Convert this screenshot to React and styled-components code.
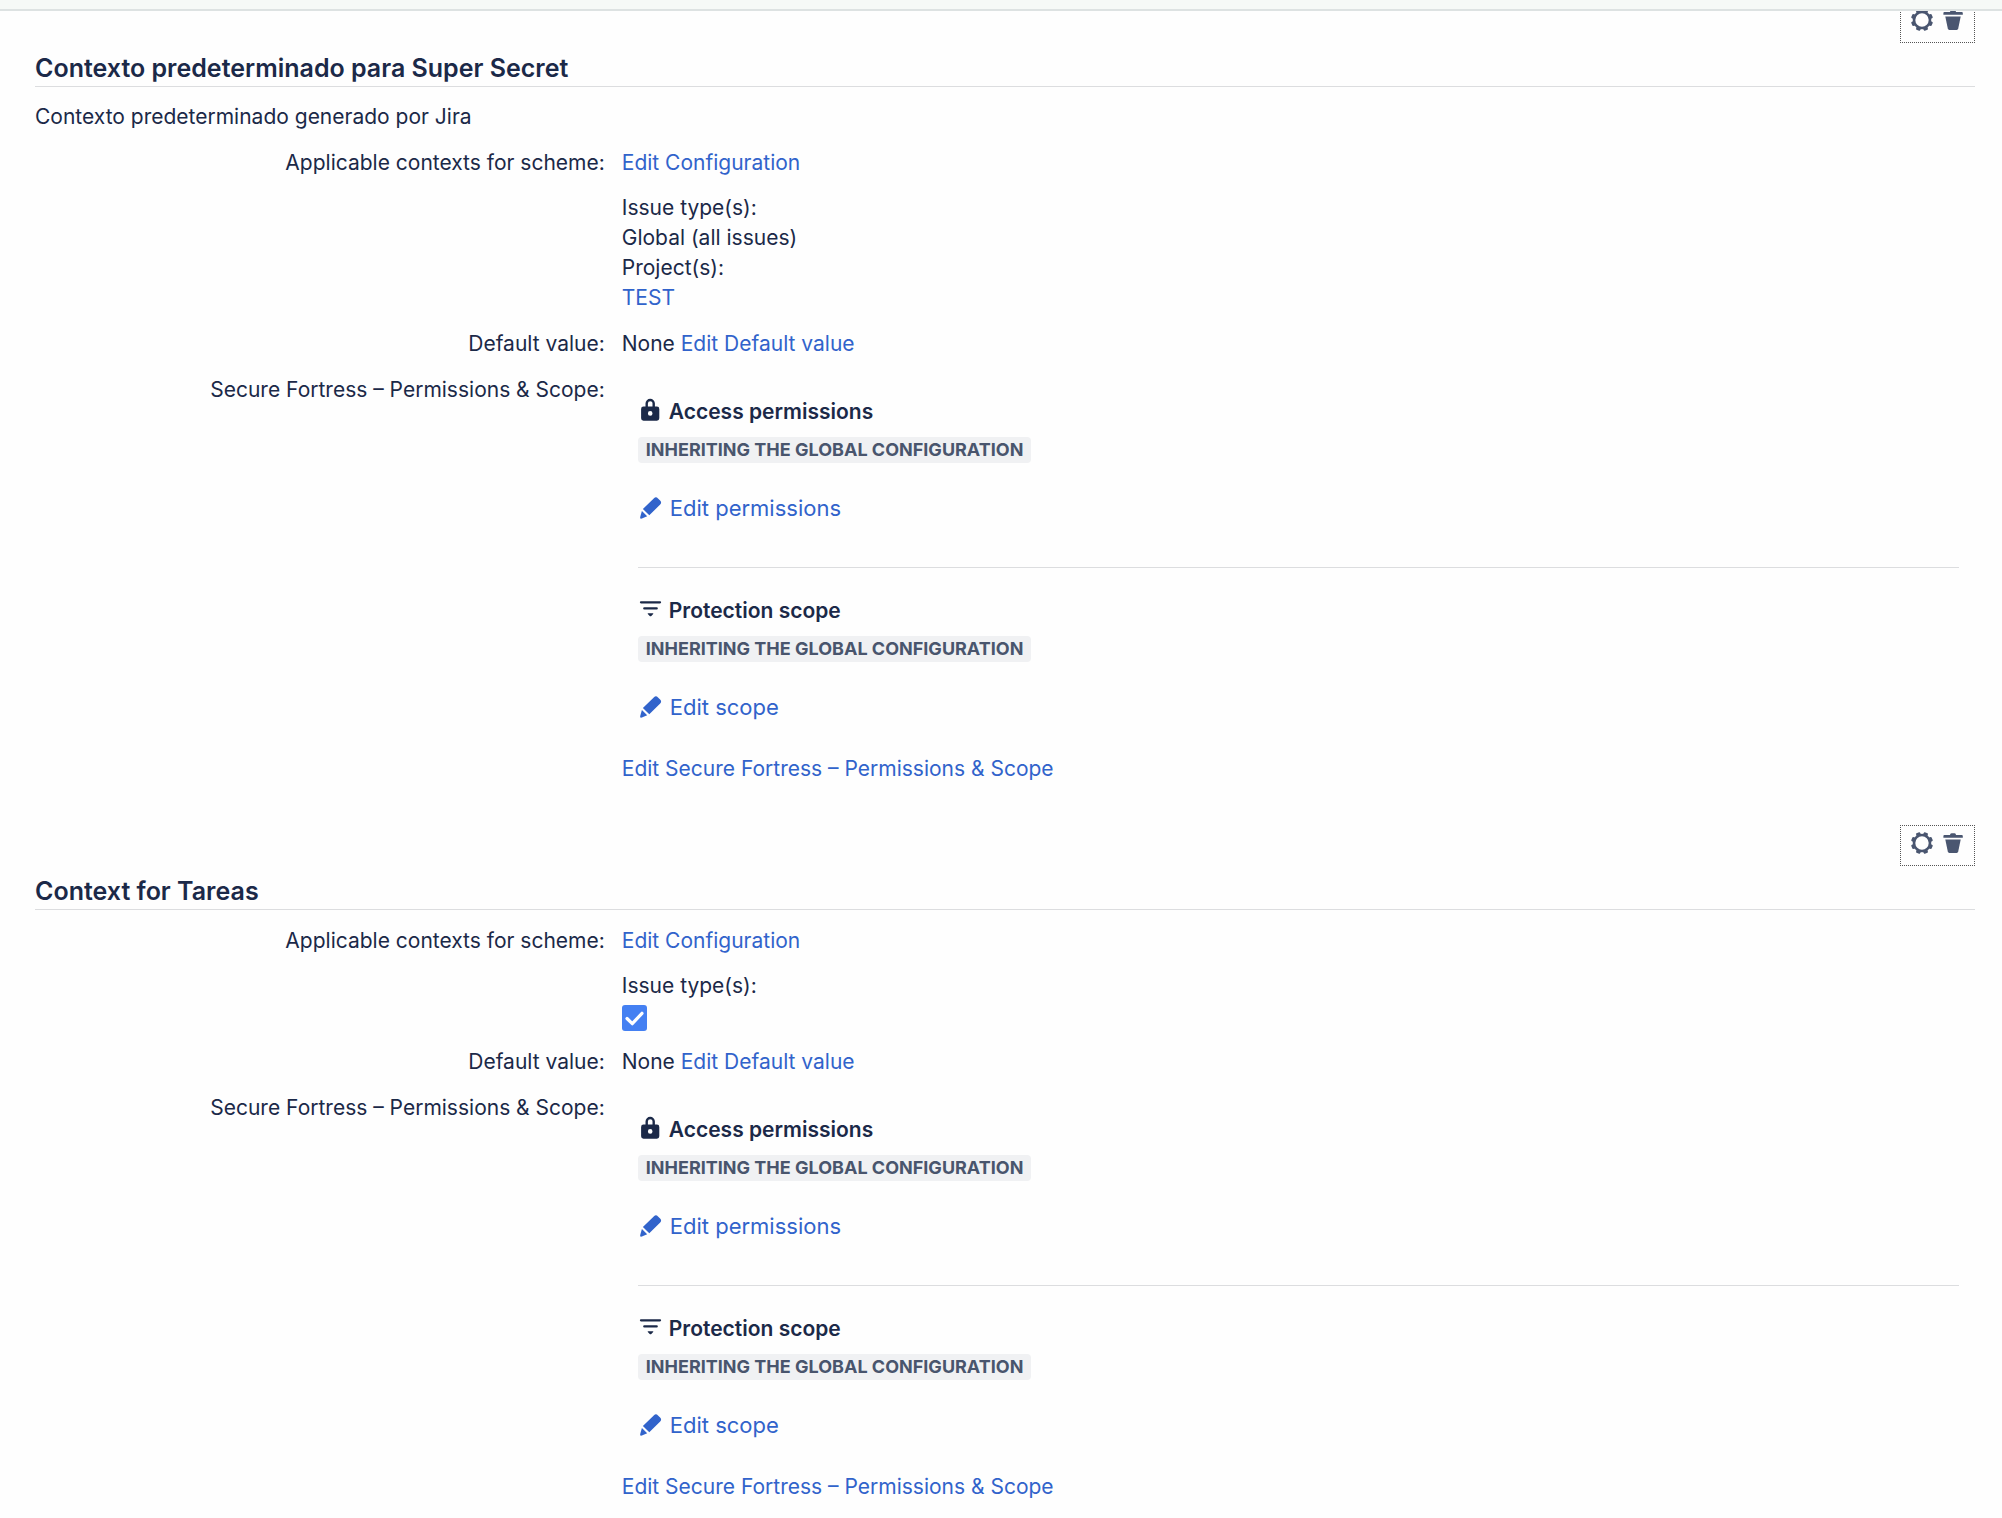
import { useState } from "react";
import styled, { createGlobalStyle } from "styled-components";

const contexts = [
  {
    id: "super-secret",
    title: "Contexto predeterminado para Super Secret",
    description: "Contexto predeterminado generado por Jira",
    issueTypes: "Global (all issues)",
    projects: ["TEST"],
  },
  {
    id: "tareas",
    title: "Context for Tareas",
  },
];

const teeth = [22.5, 67.5, 112.5, 157.5, 202.5, 247.5, 292.5, 337.5];

const GearIcon = () => (
  <svg width="24" height="24" viewBox="0 0 24 24" fill="currentColor" aria-hidden="true">
    <circle cx="12" cy="12" r="8" fill="none" stroke="currentColor" strokeWidth="2.6" />
    {teeth.map((angle) => (
      <path
        key={angle}
        d="M9.4 4.4 9.9 1.6Q10 1 10.600 1h2.800q.6 0 .7.600l.5 2.800z"
        transform={`rotate(${angle} 12 12)`}
      />
    ))}
  </svg>
);

const TrashIcon = () => (
  <svg width="24" height="24" viewBox="0 0 24 24" fill="currentColor" aria-hidden="true">
    <path d="M3.4 4H9q0-1.8 1.6-1.8h3Q15 2.2 15 4h5.8q1 0 1 1v1.7H2.4V5q0-1 1-1z" />
    <path d="M4.3 8.400h15.400l-2.500 12.200q-.3 1.300-1.500 1.300H8.300q-1.200 0-1.500-1.300z" />
  </svg>
);

const LockIcon = () => (
  <svg width="24" height="26" viewBox="0 0 24 26" aria-hidden="true">
    <path
      d="M8.7 10V6.5a3.5 3.5 0 0 1 7 0V10"
      fill="none"
      stroke="currentColor"
      strokeWidth="2.4"
    />
    <path
      fill="currentColor"
      fillRule="evenodd"
      d="M5.5 9.5h13.4a2.4 2.4 0 0 1 2.4 2.4v9.4a2.4 2.4 0 0 1-2.4 2.4H5.5a2.4 2.4 0 0 1-2.4-2.4v-9.4a2.4 2.4 0 0 1 2.4-2.4zm6.7 4.6a2.3 2.3 0 1 0 0 4.6 2.3 2.3 0 0 0 0-4.6z"
    />
  </svg>
);

const FilterIcon = () => (
  <svg width="24" height="26" viewBox="0 0 24 26" aria-hidden="true">
    <g stroke="currentColor" strokeWidth="2.3" strokeLinecap="round">
      <path d="M3 6.3h19" />
      <path d="M6.3 12.4h12.4" />
    </g>
    <path
      d="M10.2 17.2h4.6q1 0 .4.8l-1.9 2q-.8.7-1.6 0l-1.9-2q-.6-.8.4-.8z"
      fill="currentColor"
    />
  </svg>
);

const PencilIcon = () => (
  <svg width="24" height="24" viewBox="0 0 24 24" fill="currentColor" aria-hidden="true">
    <path d="M16 2.3q2-1.900 4 .1l2.1 2.1q2 2 .1 4L11.3 19.3 4.9 12.9z" />
    <path d="M3.9 14.9l5.3 5.3-5.3 2.3q-2.300.7-1.700-1.600z" />
  </svg>
);

const ScopeBlock = ({ icon, title, action }) => (
  <Block>
    <BlockTitle>
      {icon}
      {title}
    </BlockTitle>
    <Lozenge>Inheriting the global configuration</Lozenge>
    <BlockAction href="#edit">
      <PencilIcon />
      {action}
    </BlockAction>
  </Block>
);

const ContextSection = ({ context }) => {
  const [allTypes, setAllTypes] = useState(true);

  return (
    <Section>
      <Actions>
        <IconButton aria-label="Configure context">
          <GearIcon />
        </IconButton>
        <IconButton aria-label="Delete context">
          <TrashIcon />
        </IconButton>
      </Actions>
      <Title>{context.title}</Title>
      {context.description && <Description>{context.description}</Description>}
      <Details>
        <Row>
          <dt>Applicable contexts for scheme:</dt>
          <Value>
            <Link href="#configuration">Edit Configuration</Link>
            <Scheme>
              <div id={`types-${context.id}`}>Issue type(s):</div>
              {context.issueTypes ? (
                <div>{context.issueTypes}</div>
              ) : (
                <Checkbox
                  type="checkbox"
                  aria-labelledby={`types-${context.id}`}
                  checked={allTypes}
                  onChange={(e) => setAllTypes(e.target.checked)}
                />
              )}
              {context.projects && <div>Project(s):</div>}
              {context.projects?.map((project) => (
                <div key={project}>
                  <Link href="#project">{project}</Link>
                </div>
              ))}
            </Scheme>
          </Value>
        </Row>
        <Row>
          <dt>Default value:</dt>
          <Value>
            None <Link href="#default">Edit Default value</Link>
          </Value>
        </Row>
        <Row>
          <dt>Secure Fortress – Permissions &amp; Scope:</dt>
          <Value>
            <Panel>
              <ScopeBlock icon={<LockIcon />} title="Access permissions" action="Edit permissions" />
              <Divider />
              <ScopeBlock icon={<FilterIcon />} title="Protection scope" action="Edit scope" />
            </Panel>
            <Link href="#fortress">Edit Secure Fortress – Permissions &amp; Scope</Link>
          </Value>
        </Row>
      </Details>
    </Section>
  );
};

const App = () => {
  return (
    <>
      <GlobalStyle />
      <TopBar />
      <Page>
        {contexts.map((context) => (
          <ContextSection key={context.id} context={context} />
        ))}
      </Page>
    </>
  );
};

const GlobalStyle = createGlobalStyle`
  * {
    box-sizing: border-box;
  }
  body {
    margin: 0;
    background-color: #fefefe;
    color: #1b2948;
    font-family: Inter, "Liberation Sans", sans-serif;
    font-size: 21px;
    line-height: 30px;
  }
`;
const TopBar = styled.header`
  position: fixed;
  top: 0;
  left: 0;
  right: 0;
  height: 11px;
  background-color: #f6f9f7;
  border-bottom: 2px solid #dde2e2;
`;
const Page = styled.main`
  padding: 2px 27px 0 35px;
`;
const Section = styled.section`
  display: flex;
  flex-direction: column;
  margin-bottom: 41px;
`;
const Actions = styled.div`
  display: flex;
  align-self: flex-end;
  gap: 7px;
  padding: 5px 9px 10px;
  border: 1px dotted #555;
`;
const IconButton = styled.button`
  display: flex;
  padding: 0;
  border: none;
  background: none;
  color: #4a5670;
  cursor: pointer;
`;
const Title = styled.h2`
  margin: 9px 0 0;
  padding-bottom: 2px;
  border-bottom: 1px solid #dcdddf;
  font-size: 25px;
  font-weight: 600;
  line-height: 32px;
`;
const Description = styled.p`
  margin: 15px 0 0;
`;
const Details = styled.dl`
  display: flex;
  flex-direction: column;
  gap: 16px;
  margin: 16px 0 0;
`;
const Row = styled.div`
  display: grid;
  grid-template-columns: 8fr 19fr;
  gap: 17px;

  dt {
    text-align: right;
  }
`;
const Value = styled.dd`
  margin: 0;
`;
const Scheme = styled.div`
  margin-top: 15px;
`;
const Link = styled.a`
  color: #3163cb;
  text-decoration: none;

  &:hover {
    text-decoration: underline;
  }
`;
const Checkbox = styled.input`
  appearance: none;
  display: block;
  width: 25px;
  height: 26px;
  margin: 4px 0 0;
  border-radius: 3px;
  border: 1px solid #8993a4;

  &:checked {
    border: none;
    background: #4480f2
      url("data:image/svg+xml,%3Csvg xmlns='http://www.w3.org/2000/svg' viewBox='0 0 25 26' fill='none' stroke='white' stroke-width='3.2' stroke-linecap='round' stroke-linejoin='round'%3E%3Cpath d='M5 13.5l5.3 5.2L20 8.3'/%3E%3C/svg%3E");
  }
`;
const Panel = styled.div`
  padding: 22px 16px 32px;
`;
const Block = styled.div`
  display: flex;
  flex-direction: column;
  align-items: flex-start;
`;
const BlockTitle = styled.h3`
  display: flex;
  gap: 7px;
  margin: 0;
  font-size: 21px;
  font-weight: 600;
  line-height: 30px;
`;
const Lozenge = styled.span`
  margin-top: 10px;
  padding: 0 8px;
  border-radius: 4px;
  background-color: #f0f1f3;
  color: #49556d;
  font-size: 18px;
  font-weight: 700;
  line-height: 26px;
  text-transform: uppercase;
`;
const BlockAction = styled(Link)`
  display: flex;
  align-items: center;
  gap: 8px;
  margin-top: 30px;
  font-size: 22px;
`;
const Divider = styled.hr`
  width: 100%;
  margin: 44px 0 28px;
  border: none;
  border-top: 1px solid #dcdddf;
`;
export default App;
